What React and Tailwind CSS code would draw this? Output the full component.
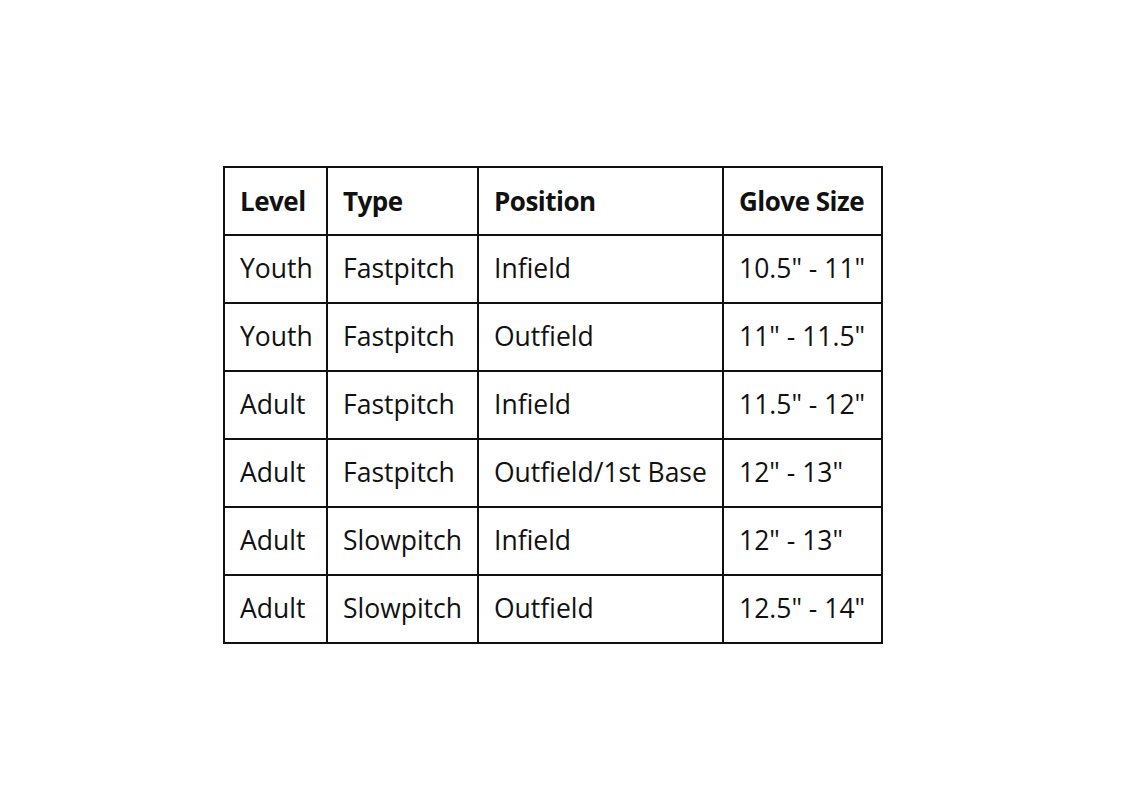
const rows = [
  ['Youth', 'Fastpitch', 'Infield', '10.5" - 11"'],
  ['Youth', 'Fastpitch', 'Outfield', '11" - 11.5"'],
  ['Adult', 'Fastpitch', 'Infield', '11.5" - 12"'],
  ['Adult', 'Fastpitch', 'Outfield/1st Base', '12" - 13"'],
  ['Adult', 'Slowpitch', 'Infield', '12" - 13"'],
  ['Adult', 'Slowpitch', 'Outfield', '12.5" - 14"'],
];

export default function App() {
  return (
    <div className="min-h-[800px] bg-white pt-[166px] pl-[223px]" style={{ fontFamily: '"Open Sans", sans-serif' }}>
      <table className="border-collapse text-[26.5px] text-[#111]">
        <colgroup>
          <col className="w-[103px]" />
          <col className="w-[151px]" />
          <col className="w-[245px]" />
          <col className="w-[159px]" />
        </colgroup>
        <thead>
          <tr className="h-[68px]">
            {['Level', 'Type', 'Position', 'Glove Size'].map((h) => (
              <th key={h} className="border-2 border-[#111] pl-[15px] pr-1 text-left text-[26px] font-bold tracking-[-0.5px] whitespace-nowrap">
                {h}
              </th>
            ))}
          </tr>
        </thead>
        <tbody>
          {rows.map((r, i) => (
            <tr key={i} className="h-[68px]">
              {r.map((c, j) => (
                <td key={j} className="border-2 border-[#111] pl-[15px] pr-1 whitespace-nowrap">
                  {c}
                </td>
              ))}
            </tr>
          ))}
        </tbody>
      </table>
    </div>
  );
}
